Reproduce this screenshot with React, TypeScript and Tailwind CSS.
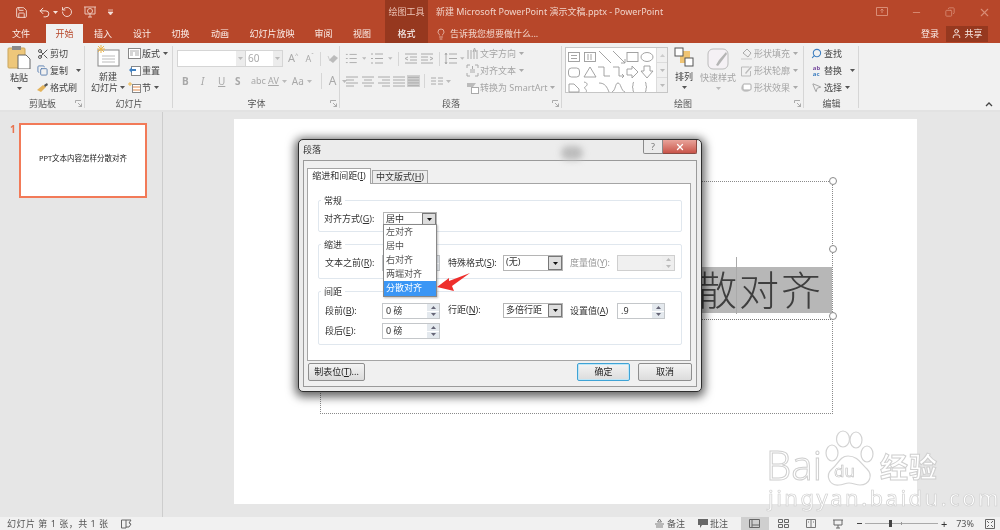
import React from 'react';
import { Save, Undo2, RotateCcw, Lightbulb, Scissors, Search, MousePointer2, User, Minus, X, Copy } from 'lucide-react';

const Caret = ({ color = '#555', className = '' }: { color?: string; className?: string }) => (
  <svg width="5" height="3" viewBox="0 0 5 3" className={className}>
    <path d="M0 0h5L2.5 3z" fill={color} />
  </svg>
);

const Launcher = () => (
  <svg width="7" height="7" viewBox="0 0 7 7" className="absolute right-[3px] bottom-[3px]">
    <path d="M.5 3V.5H6M6.5 6.5L3 3M6.5 3.5v3h-3" stroke="#999" fill="none" strokeWidth="0.8" />
  </svg>
);

const Group = ({ w, label, launcher, children }: { w: number; label: string; launcher?: boolean; children: React.ReactNode }) => (
  <div className="relative flex h-full flex-col" style={{ width: w }}>
    <div className="flex flex-1 pt-[2px]">{children}</div>
    <div className="h-[14px] pt-[2px] text-center text-[9px] leading-[12px] text-[#555]">{label}</div>
    {launcher && <Launcher />}
    <div className="absolute right-0 top-[3px] bottom-[2px] w-px bg-[#d6d6d6]" />
  </div>
);

const SmallBtn = ({ icon, text, caret, muted }: { icon: React.ReactNode; text: string; caret?: boolean; muted?: boolean }) => (
  <div className={`flex h-[17px] items-center text-[9px] ${muted ? 'text-[#a5a5a5]' : 'text-[#444]'}`}>
    <span className="flex w-[15px] justify-center">{icon}</span>
    <span className="whitespace-nowrap">{text}</span>
    {caret && <Caret color={muted ? '#aaa' : '#555'} className="ml-[3px]" />}
  </div>
);

const PasteIcon = () => (
  <svg width="24" height="24" viewBox="0 0 24 24">
    <rect x="1" y="3" width="17" height="20" rx="1" fill="#eec77a" stroke="#c9a55c" />
    <rect x="5" y="1" width="9" height="4" fill="#8b8b8b" />
    <path d="M11 10h8l4 4v10H11z" fill="#fff" stroke="#666" />
  </svg>
);

const NewSlideIcon = () => (
  <svg width="24" height="22" viewBox="0 0 24 22">
    <rect x="2" y="5" width="21" height="16" fill="#fff" stroke="#888" />
    <path d="M6 11h13M6 14h13M6 17h13" stroke="#bbb" />
    <path d="M5 0v8M1 4h8M2 1l6 6M8 1L2 7" stroke="#eeb64a" strokeWidth="1" />
  </svg>
);

const ArrangeIcon = () => (
  <svg width="20" height="20" viewBox="0 0 20 20">
    <rect x="6" y="4" width="10" height="12" fill="#f0c473" />
    <rect x="1" y="1" width="8" height="8" fill="#fff" stroke="#555" />
    <rect x="11" y="11" width="8" height="8" fill="#fff" stroke="#555" />
  </svg>
);

const StyleIcon = () => (
  <svg width="22" height="22" viewBox="0 0 22 22">
    <rect x="1" y="1" width="20" height="20" rx="5" fill="#f5f1f5" stroke="#bbb" />
    <path d="M9 17l3-5 7-8 1 2-6 8-3 4z" fill="#b5b5b5" />
  </svg>
);

const ListIcon = ({ kind }: { kind: string }) => {
  const lines: Record<string, string> = {
    left: 'M1 2h12M1 5h8M1 8h12M1 11h8',
    center: 'M1 2h12M3 5h8M1 8h12M3 11h8',
    right: 'M1 2h12M5 5h8M1 8h12M5 11h8',
    justify: 'M1 2h12M1 5h12M1 8h12M1 11h12',
    bullet: 'M1 2h2M5 2h8M1 6.500h2M5 6.500h8M1 11h2M5 11h8',
    indentL: 'M1 2h12M6 5h7M6 8h7M1 11h12M4 5L1 6.500 4 8',
    indentR: 'M1 2h12M1 5h7M1 8h7M1 11h12M10 5l3 1.500L10 8',
    spacing: 'M5 2h8M5 6.500h8M5 11h8M2 1v11M1 3l1-2 1 2M1 10l1 2 1-2',
    cols: 'M1 3h5M8 3h5M1 6h5M8 6h5M1 9h5M8 9h5',
  };
  return (
    <svg width="14" height="13" viewBox="0 0 14 13">
      <path d={lines[kind]} stroke="#aaa" strokeWidth="1" fill="none" />
    </svg>
  );
};

const Gallery = () => (
  <svg width="90" height="46" viewBox="0 0 90 46" className="block">
    <g stroke="#9a9a9a" fill="none" strokeWidth="0.9">
      <rect x="2.500" y="4.500" width="11" height="9" />
      <path d="M5 7.500h6M5 10.500h6" />
      <rect x="18.500" y="4.500" width="11" height="9" />
      <path d="M22 6v6M25 6v6" />
      <path d="M33 3l12 12M47 3l12 12M55 15h4v-4" />
      <rect x="61" y="4.500" width="11" height="9" />
      <ellipse cx="81" cy="9" rx="6" ry="4.500" />
      <rect x="2.500" y="20" width="11" height="9" rx="3" />
      <path d="M18 29l6-10 6 10z" />
      <path d="M32 19h6v9h6M47 19h6v9h5M56 26l2 2-2 2" />
      <path d="M61 21h5v-3l6 6-6 6v-3h-5z" />
      <path d="M78 18h6v5h3l-6 7-6-7h3z" />
      <path d="M3 36h5l5 5v3H3zM18 34c5 1 3 4 1 5s3 3 1 5M33 35c6 0 8 4 10 9M46 44c4-2 3-9 6-9s3 8 7 9" />
      <path d="M68 34c-2 0 0 5-2 5 2 0 0 5 2 5M79 34c2 0 0 5 2 5-2 0 0 5-2 5" />
    </g>
  </svg>
);

const Spinner = ({ disabled }: { disabled?: boolean }) => (
  <div className="flex w-[12px] flex-col gap-px">
    <div className={`flex flex-1 items-center justify-center ${disabled ? 'bg-[#eeeeee]' : 'bg-[#e4e9ee]'}`}>
      <svg width="5" height="3" viewBox="0 0 5 3"><path d="M0 3h5L2.500 0z" fill={disabled ? '#bbb' : '#667'} /></svg>
    </div>
    <div className={`flex flex-1 items-center justify-center ${disabled ? 'bg-[#eeeeee]' : 'bg-[#e4e9ee]'}`}>
      <Caret color={disabled ? '#bbb' : '#667'} />
    </div>
  </div>
);

const NumInput = ({ w, value, disabled }: { w: number; value?: string; disabled?: boolean }) => (
  <div className={`flex h-[16px] shrink-0 border ${disabled ? 'border-[#cfcfcf] bg-[#f0f0f0]' : 'border-[#c4c7ca] bg-white'}`} style={{ width: w }}>
    <div className="flex-1 pl-[3px] text-[9px] leading-[14px] text-[#333]">{value}</div>
    <Spinner disabled={disabled} />
  </div>
);

const Combo = ({ w, h, value }: { w: number; h: number; value: string }) => (
  <div className="flex shrink-0 border border-[#b5b5b5] bg-white" style={{ width: w, height: h }}>
    <div className="flex-1 pl-[2px] text-[9px] leading-[12px] text-[#333]">{value}</div>
    <div className="flex w-[14px] items-center justify-center border border-[#777] bg-[#dedede]">
      <Caret color="#111" />
    </div>
  </div>
);

const Legend = ({ children }: { children: React.ReactNode }) => (
  <span className="absolute -top-[7px] left-[2px] bg-white px-[3px] text-[9px] leading-[13px] text-[#333]">{children}</span>
);

const DlgBtn = ({ children, w, primary }: { children: React.ReactNode; w: number; primary?: boolean }) => (
  <div
    className={`flex h-[18px] items-center justify-center rounded-[2px] border bg-gradient-to-b from-[#f4f4f4] to-[#dcdcdc] text-[9px] text-[#222] ${
      primary ? 'border-[#3fa3d5] shadow-[inset_0_0_0_1px_#bfe6f7]' : 'border-[#8e8e8e]'
    }`}
    style={{ width: w }}
  >
    {children}
  </div>
);

const Paw = () => (
  <svg width="56" height="60" viewBox="0 0 56 60">
    <g fill="none" stroke="#d3d3d3" strokeWidth="1.200">
      <ellipse cx="12" cy="23" rx="6" ry="8" fill="#fff" fillOpacity="0.7" />
      <ellipse cx="23" cy="9" rx="6.500" ry="8" fill="#fff" fillOpacity="0.7" />
      <ellipse cx="36" cy="10" rx="6" ry="8" fill="#fff" fillOpacity="0.7" />
      <ellipse cx="47" cy="24" rx="6" ry="8" fill="#fff" fillOpacity="0.7" />
      <path d="M28 26c-8 0-10 8-16 13-7 6-3 17 7 16 4 0 6-2 10-2s7 2 11 2c10 0 13-10 7-16-6-5-9-13-19-13z" fill="#fff" fillOpacity="0.7" />
    </g>
  </svg>
);

export default function App() {
  const tabs = [
    ['文件', 'w-[42px] mr-[4px]'],
    ['开始', 'w-[37px]'],
    ['插入', 'w-[40px]'],
    ['设计', 'w-[38px]'],
    ['切换', 'w-[39px]'],
    ['动画', 'w-[40px]'],
    ['幻灯片放映', 'w-[64px]'],
    ['审阅', 'w-[39px]'],
    ['视图', 'w-[38px] mr-[4px]'],
  ];

  return (
    <div className="relative flex h-[530px] w-[1000px] flex-col overflow-hidden bg-[#e6e6e6] font-['Noto_Sans','Noto_Sans_CJK_SC',sans-serif] blur-[0.4px]">
      {/* title bar */}
      <div className="flex h-[24px] items-center bg-[#b7472a] text-white">
        <div className="flex items-center pl-[15px]">
          <Save size={13} strokeWidth={1.6} className="text-[#f6e3dc]" />
          <Undo2 size={13} strokeWidth={1.8} className="ml-[10px] text-[#f6e3dc]" />
          <Caret color="#f6e3dc" className="ml-[2px]" />
          <RotateCcw size={12} strokeWidth={1.8} className="ml-[3px] text-[#f6e3dc]" />
          <svg width="14" height="14" viewBox="0 0 14 14" className="ml-[10px]">
            <path d="M1 2h12M2 2v7h10V2M7 9v3M5 12h4" stroke="#ecc7ba" fill="none" />
            <circle cx="7" cy="6" r="2.500" stroke="#ecc7ba" fill="none" />
          </svg>
          <svg width="6" height="6" viewBox="0 0 6 6" className="ml-[11px]">
            <path d="M0 1h5M0 3h5l-2.500 3z" stroke="#f6e3dc" strokeWidth="0.7" fill="#f6e3dc" />
          </svg>
        </div>
        <div className="ml-[271px] flex h-full w-[43px] items-center justify-center bg-[#96381f] text-[9px] whitespace-nowrap text-[#ecc3b5]">绘图工具</div>
        <div className="ml-[8px] text-[9px] whitespace-nowrap text-[#f0d2c8]">新建 Microsoft PowerPoint 演示文稿.pptx - PowerPoint</div>
        <div className="ml-auto flex items-center pr-[9px] text-[#d98d76]">
          <svg width="12" height="10" viewBox="0 0 12 10"><path d="M.5.500h11v8H.5zM6 2v4M4.500 3.500L6 2l1.500 1.500" stroke="#d98d76" fill="none" /></svg>
          <Minus size={11} className="ml-[23px]" />
          <Copy size={10} className="ml-[23px] -scale-x-100" />
          <X size={13} className="ml-[23px]" />
        </div>
      </div>

      {/* tabs */}
      <div className="flex h-[19px] items-stretch bg-[#b7472a] text-[9px] text-[#fbeee9]">
        {tabs.map(([name, width]) => (
          <div
            key={name}
            className={`${width} flex items-center justify-center ${name === '开始' ? 'bg-[#f1f1f1] text-[#b7472a]' : ''}`}
          >
            {name}
          </div>
        ))}
        <div className="flex w-[43px] items-center justify-center bg-[#96381f] text-white">格式</div>
        <div className="ml-[7px] flex items-center text-[9px] text-[#f3d6cc]">
          <Lightbulb size={12} strokeWidth={1.4} />
          <span className="ml-[3px]">告诉我您想要做什么...</span>
        </div>
        <div className="ml-auto flex items-center pr-[12px] text-[9px]">
          <span>登录</span>
          <div className="ml-[7px] flex h-[16px] w-[42px] items-center justify-center bg-[#96381f]">
            <User size={11} />
            <span className="ml-[2px]">共享</span>
          </div>
        </div>
      </div>

      {/* ribbon */}
      <div className="relative flex h-[67px] bg-[#f1f1f1]">
        <Group w={85} label="剪贴板" launcher>
          <div className="ml-[7px] flex w-[24px] flex-col items-center text-[9px] leading-[12px] text-[#444]">
            <PasteIcon />
            <span className="mt-[3px]">粘贴</span>
            <Caret className="mt-[3px]" />
          </div>
          <div className="ml-[4px] flex flex-col">
            <SmallBtn icon={<Scissors size={12} className="text-[#555]" />} text="剪切" />
            <div className="flex items-center">
              <SmallBtn icon={<Copy size={11} className="text-[#5a7fb0]" />} text="复制" />
              <Caret className="ml-[8px]" />
            </div>
            <SmallBtn
              icon={<svg width="13" height="11" viewBox="0 0 13 11"><path d="M1 8l6-5 3 2-5 5z" fill="#e4b35a" /><path d="M8 3l3-2 1 2-3 2z" fill="#555" /></svg>}
              text="格式刷"
            />
          </div>
        </Group>

        <Group w={88} label="幻灯片">
          <div className="ml-[5px] flex w-[36px] flex-col items-center text-[9px] leading-[11px] text-[#444]">
            <NewSlideIcon />
            <span className="mt-[4px]">新建</span>
            <span className="flex items-center whitespace-nowrap">幻灯片<Caret className="ml-[2px]" /></span>
          </div>
          <div className="ml-[1px] flex flex-col">
            <SmallBtn
              icon={<svg width="13" height="11" viewBox="0 0 13 11"><rect x=".5" y=".5" width="12" height="10" fill="#fff" stroke="#888" /><path d="M2 3h9M2 5h3M2 7h3M7 5h4M7 7h4" stroke="#aaa" /></svg>}
              text="版式"
              caret
            />
            <SmallBtn
              icon={<svg width="13" height="11" viewBox="0 0 13 11"><rect x="3.500" y="1.500" width="9" height="9" fill="#fff" stroke="#888" /><path d="M1 5l3-3v2h4v2H4v2z" fill="#3f7fc0" /></svg>}
              text="重置"
            />
            <SmallBtn
              icon={<svg width="13" height="11" viewBox="0 0 13 11"><rect x="4.500" y="2.500" width="8" height="8" fill="#fff" stroke="#888" /><path d="M5 5h7M5 8h7" stroke="#e0894a" /><path d="M2 0v4M0 2h4" stroke="#eeb64a" /></svg>}
              text="节"
              caret
            />
          </div>
        </Group>

        <Group w={167} label="字体" launcher>
          <div className="ml-[4px] flex flex-col">
            <div className="mt-[5px] flex h-[17px] items-center">
              <div className="flex h-[17px] w-[69px] border border-[#d5d5d5] bg-white">
                <div className="flex-1" />
                <div className="flex w-[9px] items-center justify-center bg-[#ececec]"><Caret color="#bbb" /></div>
              </div>
              <div className="flex h-[17px] w-[37px] border border-l-0 border-[#d5d5d5] bg-white">
                <div className="flex-1 pl-[2px] text-[10px] leading-[15px] text-[#aaa]">60</div>
                <div className="flex w-[9px] items-center justify-center bg-[#ececec]"><Caret color="#bbb" /></div>
              </div>
              <span className="ml-[5px] text-[11px] text-[#aaa]">A</span>
              <span className="relative -top-[3px] text-[6px] text-[#aaa]">^</span>
              <span className="ml-[7px] text-[9px] text-[#aaa]">A</span>
              <span className="relative -top-[3px] text-[6px] text-[#aaa]">ˇ</span>
              <div className="ml-[6px] h-[14px] w-px bg-[#d6d6d6]" />
              <svg width="12" height="12" viewBox="0 0 12 12" className="ml-[6px]"><path d="M2 7l5-5 4 3-5 5z" fill="#bbb" /><path d="M1 3l2 5" stroke="#ccc" /></svg>
            </div>
            <div className="mt-[6px] flex h-[16px] items-center text-[10px] text-[#a8a8a8]">
              <span className="ml-[5px] w-[19px] font-bold">B</span>
              <span className="w-[17px] italic">I</span>
              <span className="w-[17px] underline">U</span>
              <span className="w-[16px] font-bold">S</span>
              <span className="w-[17px] text-[9px]">abc</span>
              <span className="text-[9px] underline">AV</span>
              <Caret color="#bbb" className="ml-[3px]" />
              <span className="ml-[5px]">Aa</span>
              <Caret color="#bbb" className="ml-[3px]" />
              <div className="ml-[9px] h-[16px] w-px bg-[#d6d6d6]" />
              <span className="ml-[7px] text-[12px]">A</span>
              <Caret color="#bbb" className="ml-[6px]" />
            </div>
          </div>
        </Group>

        <Group w={222} label="段落" launcher>
          <div className="ml-[5px] flex w-[120px] flex-col">
            <div className="mt-[5px] flex h-[17px] items-center">
              <ListIcon kind="bullet" />
              <Caret color="#bbb" className="ml-[4px]" />
              <span className="ml-[4px]"><ListIcon kind="bullet" /></span>
              <Caret color="#bbb" className="ml-[4px]" />
              <div className="ml-[5px] h-[14px] w-px bg-[#d6d6d6]" />
              <span className="ml-[5px]"><ListIcon kind="indentL" /></span>
              <span className="ml-[2px]"><ListIcon kind="indentR" /></span>
              <div className="ml-[5px] h-[14px] w-px bg-[#d6d6d6]" />
              <span className="ml-[5px]"><ListIcon kind="spacing" /></span>
              <Caret color="#bbb" className="ml-[2px]" />
            </div>
            <div className="mt-[6px] flex h-[16px] items-center">
              <ListIcon kind="left" />
              <span className="ml-[2px]"><ListIcon kind="center" /></span>
              <span className="ml-[2px]"><ListIcon kind="right" /></span>
              <span className="ml-[1px]"><ListIcon kind="justify" /></span>
              <span className="ml-[1px] flex h-[12px] w-[13px] bg-[#cfcfcf]"><ListIcon kind="justify" /></span>
              <div className="ml-[4px] h-[14px] w-px bg-[#d6d6d6]" />
              <span className="ml-[5px]"><ListIcon kind="cols" /></span>
              <Caret color="#bbb" className="ml-[2px]" />
            </div>
          </div>
          <div className="flex flex-col">
            <SmallBtn muted caret text="文字方向" icon={<svg width="13" height="13" viewBox="0 0 13 13"><path d="M2 3v9M5 3v9M8 12V3M11 12V3M7 5l1.500-4L10 5" stroke="#aaa" fill="none" /></svg>} />
            <SmallBtn muted caret text="对齐文本" icon={<svg width="13" height="13" viewBox="0 0 13 13"><path d="M1 4V1h3M9 1h3v3M1 9v3h3M9 12h3V9M4 6h5M4 8h5M6.500 2v3" stroke="#aaa" fill="none" /></svg>} />
            <SmallBtn muted caret text="转换为 SmartArt" icon={<svg width="13" height="13" viewBox="0 0 13 13"><path d="M1 2h9l-3 4H1z" fill="#bbb" /><rect x="5.500" y="6.500" width="7" height="6" fill="#fff" stroke="#aaa" /></svg>} />
          </div>
        </Group>

        <Group w={242} label="绘图" launcher>
          <div className="ml-[3px] mt-[2px] flex h-[46px] border border-[#c6c6c6] bg-white">
            <Gallery />
            <div className="flex w-[11px] flex-col border-l border-[#dcdcdc] bg-[#f0f0f0]">
              <div className="flex flex-1 items-center justify-center border-b border-[#dcdcdc]"><Caret color="#ccc" className="rotate-180" /></div>
              <div className="flex flex-1 items-center justify-center border-b border-[#dcdcdc]"><Caret color="#bbb" /></div>
              <div className="flex flex-1 items-center justify-center"><Caret color="#bbb" /></div>
            </div>
          </div>
          <div className="ml-[4px] flex w-[24px] flex-col items-center text-[9px] leading-[12px] text-[#444]">
            <span className="mt-[2px]"><ArrangeIcon /></span>
            <span className="mt-[4px] whitespace-nowrap">排列</span>
            <Caret className="mt-[3px]" />
          </div>
          <div className="ml-[4px] flex w-[36px] flex-col items-center text-[9px] leading-[12px] text-[#a5a5a5]">
            <span className="mt-[3px]"><StyleIcon /></span>
            <span className="mt-[2px] whitespace-nowrap">快速样式</span>
            <Caret color="#bbb" className="mt-[3px]" />
          </div>
          <div className="ml-[3px] flex flex-col">
            <SmallBtn muted caret text="形状填充" icon={<svg width="13" height="13" viewBox="0 0 13 13"><path d="M3 6l4-4 4 4-3 4z" fill="none" stroke="#aaa" /><rect x="1" y="11" width="11" height="2" fill="#ddd" /></svg>} />
            <SmallBtn muted caret text="形状轮廓" icon={<svg width="13" height="13" viewBox="0 0 13 13"><path d="M1.500 3h8M1.500 3v9h9V7" stroke="#bbb" fill="none" /><path d="M5 9l6-7 1 1-6 7z" fill="#bbb" /></svg>} />
            <SmallBtn muted caret text="形状效果" icon={<svg width="13" height="13" viewBox="0 0 13 13"><ellipse cx="6" cy="7" rx="5" ry="4" fill="#ccc" /><rect x="3" y="3" width="8" height="6" rx="1" fill="#fff" stroke="#aaa" /></svg>} />
          </div>
        </Group>

        <Group w={55} label="编辑">
          <div className="ml-[5px] flex flex-col">
            <SmallBtn icon={<Search size={11} strokeWidth={2.4} className="-scale-x-100 text-[#3f7fc0]" />} text="查找" />
            <div className="flex items-center">
              <SmallBtn icon={<span className="text-[6px] leading-[6px] font-bold text-[#7a4fa0]">ab<br /><span className="text-[#3f7fc0]">ac</span></span>} text="替换" />
              <Caret className="ml-[8px]" />
            </div>
            <SmallBtn icon={<MousePointer2 size={11} strokeWidth={1.2} className="text-[#666]" />} text="选择" caret />
          </div>
        </Group>

        <svg width="8" height="5" viewBox="0 0 8 5" className="absolute right-[7px] bottom-[3px]">
          <path d="M1 4l3-3 3 3" stroke="#444" strokeWidth="1.300" fill="none" />
        </svg>
      </div>

      {/* workspace */}
      <div className="flex flex-1 border-t-2 border-[#e2e2e2]">
        <div className="flex w-[163px] shrink-0 border-r border-[#cdcdcd] pt-[11px]">
          <span className="ml-[10px] w-[9px] text-[10px] leading-[12px] font-bold text-[#e8744f]">1</span>
          <div className="flex h-[75px] w-[128px] items-center justify-center border-[2.5px] border-[#f27a58] bg-white pb-[4px] text-[7.5px] whitespace-nowrap text-[#222]">
            PPT文本内容怎样分散对齐
          </div>
        </div>
        <div className="flex-1 pt-[7px] pl-[71px]">
          <div className="relative h-[385px] w-[683px] bg-white">
            <div className="absolute left-[86px] top-[62px] h-[233px] w-[513px] border border-dotted border-[#8a8a8a]" />
            <div className="absolute left-[86px] top-[200px] h-px w-[513px] border-t border-dotted border-[#777]" />
            <div className="absolute left-[360px] top-[148px] flex h-[46px] w-[238px] items-center justify-end bg-[#b7b7b7] pr-[9px] text-[40px] leading-none tracking-[2px] font-light whitespace-nowrap text-[#3e3e3e]">
              分散对齐
            </div>
            <div className="absolute left-[502px] top-[138px] h-[57px] w-px bg-[#aaa]" />
            {[62, 130, 197].map(top => (
              <div key={top} className="absolute left-[595px] h-[8px] w-[8px] -translate-y-1/2 rounded-full border border-[#8a8a8a] bg-white" style={{ top }} />
            ))}
          </div>
        </div>
      </div>

      {/* status bar */}
      <div className="flex h-[13px] items-center bg-[#f1f1f1] text-[9px] whitespace-nowrap text-[#555]">
        <span className="ml-[7px] tracking-[0.5px]">幻灯片 第 1 张，共 1 张</span>
        <svg width="11" height="10" viewBox="0 0 11 10" className="ml-[12px]"><path d="M.5 1h4.500v8H.5zM5 1h5l-2 3 2 1-2 3H5" stroke="#666" fill="none" /></svg>
        <div className="ml-auto flex h-full items-center pr-[5px]">
          <svg width="9" height="9" viewBox="0 0 9 9"><path d="M0 5h9M1 7h7M1 9h7M4.500 0l2 3h-4z" stroke="#666" strokeWidth="0.8" fill="none" /></svg>
          <span className="ml-[3px]">备注</span>
          <svg width="10" height="9" viewBox="0 0 10 9" className="ml-[13px]"><path d="M0 0h10v6H4L2 9V6H0z" fill="#666" /></svg>
          <span className="ml-[2px]">批注</span>
          <div className="ml-[13px] flex h-full w-[28px] items-center justify-center bg-[#cfcfcf]">
            <svg width="11" height="9" viewBox="0 0 11 9"><path d="M.5.500h10v8H.5zM3 .500v8M3 6h7" stroke="#666" fill="none" /></svg>
          </div>
          <svg width="11" height="9" viewBox="0 0 11 9" className="ml-[9px]"><path d="M.5.500h4v3h-4zM6.500.500h4v3h-4zM.5 5.500h4v3h-4zM6.500 5.500h4v3h-4z" stroke="#666" fill="none" /></svg>
          <svg width="10" height="9" viewBox="0 0 10 9" className="ml-[17px]"><path d="M.5.500h9v8h-9zM5 .500v8M2 3h1M7 3h1" stroke="#777" fill="none" /></svg>
          <svg width="10" height="10" viewBox="0 0 10 10" className="ml-[17px]"><path d="M0 1h10M1 1v5h8V1M5 6v3M3 9h4" stroke="#666" fill="none" /></svg>
          <span className="ml-[14px] h-px w-[5px] bg-[#444]" />
          <div className="relative ml-[3px] h-px w-[73px] bg-[#aaa]">
            <span className="absolute left-[24px] -top-[3px] h-[7px] w-[3px] bg-[#444]" />
            <span className="absolute left-[36px] -top-[1px] h-[3px] w-px bg-[#999]" />
          </div>
          <span className="ml-[3px] text-[11px] leading-none text-[#333]">+</span>
          <span className="ml-[9px]">73%</span>
          <svg width="10" height="10" viewBox="0 0 10 10" className="ml-[11px]"><path d="M.5.500h9v9h-9zM2 2l2 2M8 2L6 4M2 8l2-2M8 8L6 6" stroke="#666" fill="none" /></svg>
        </div>
      </div>

      {/* paragraph dialog */}
      <div className="absolute left-[298px] top-[139px] flex h-[253px] w-[404px] flex-col rounded-[5px] border border-[#2e2e2e] bg-[#ececec] px-[4px] pb-[4px] shadow-[0_2px_10px_3px_rgba(0,0,0,0.6)]">
        <span className="absolute left-[262px] top-[6px] h-[14px] w-[22px] rounded-full bg-[#bdbdbd] blur-[3px]" />
        <div className="relative flex h-[20px] items-center justify-between">
          <span className="text-[9px] text-[#333]">段落</span>
          <div className="-mt-[6px] flex h-[14px] items-stretch">
            <div className="flex w-[20px] items-center justify-center rounded-bl-[2px] border border-t-0 border-[#8a8a8a] bg-[#ebebeb] text-[9px] text-[#777]">?</div>
            <div className="flex w-[34px] items-center justify-center rounded-br-[2px] border border-t-0 border-l-0 border-[#8a4a42] bg-gradient-to-b from-[#e8a39a] to-[#c8544a]">
              <X size={10} strokeWidth={3} className="text-white" />
            </div>
          </div>
        </div>
        <div className="flex flex-1 flex-col border border-[#9a9a9a] bg-[#f0f0f0] px-[3px] pt-[7px]">
          <div className="flex items-end">
            <div className="relative z-10 -mb-px h-[16px] w-[64px] border border-b-0 border-[#a5a5a5] bg-white text-center text-[9px] leading-[14px] text-[#333]">缩进和间距(<u>I</u>)</div>
            <div className="-mb-px ml-px h-[14px] w-[56px] border border-[#a5a5a5] bg-[#ececec] text-center text-[9px] leading-[12px] text-[#333]">中文版式(<u>H</u>)</div>
          </div>
          <div className="h-[178px] w-[384px] border border-[#a5a5a5] bg-white px-[10px] pt-[16px]">
            <div className="relative h-[32px] w-[364px] rounded-[2px] border border-[#e0e7ee] pl-[5px] pt-[11px]">
              <Legend>常规</Legend>
              <div className="flex items-center text-[9px] text-[#333]">
                <span className="w-[59px]">对齐方式(<u>G</u>):</span>
                <Combo w={54} h={14} value="居中" />
              </div>
            </div>
            <div className="relative mt-[12px] h-[35px] w-[364px] rounded-[2px] border border-[#e0e7ee] pl-[6px] pt-[10px]">
              <Legend>缩进</Legend>
              <div className="flex items-center text-[9px] text-[#333]">
                <span className="w-[57px]">文本之前(<u>R</u>):</span>
                <NumInput w={58} />
                <span className="ml-[8px] w-[55px]">特殊格式(<u>S</u>):</span>
                <Combo w={60} h={16} value="(无)" />
                <span className="ml-[7px] w-[47px] text-[#999]">度量值(<u>Y</u>):</span>
                <NumInput w={58} disabled />
              </div>
            </div>
            <div className="relative mt-[12px] h-[54px] w-[364px] rounded-[2px] border border-[#e0e7ee] pl-[6px] pt-[11px]">
              <Legend>间距</Legend>
              <div className="flex items-start text-[9px] text-[#333]">
                <div className="flex flex-col gap-[4px]">
                  <div className="flex items-center">
                    <span className="w-[57px]">段前(<u>B</u>):</span>
                    <NumInput w={58} value="0 磅" />
                  </div>
                  <div className="flex items-center">
                    <span className="w-[57px]">段后(<u>E</u>):</span>
                    <NumInput w={58} value="0 磅" />
                  </div>
                </div>
                <span className="ml-[8px] w-[55px] leading-[14px]">行距(<u>N</u>):</span>
                <Combo w={60} h={15} value="多倍行距" />
                <span className="ml-[7px] w-[47px] leading-[16px]">设置值(<u>A</u>)</span>
                <NumInput w={48} value=".9" />
              </div>
            </div>
          </div>
          <div className="mt-[2px] flex items-center pl-[1px]">
            <DlgBtn w={57}>制表位(<u>T</u>)...</DlgBtn>
            <div className="ml-auto flex gap-[8px] pr-[1px]">
              <DlgBtn w={53} primary>确定</DlgBtn>
              <DlgBtn w={54}>取消</DlgBtn>
            </div>
          </div>
        </div>

        {/* open alignment list */}
        <div className="absolute left-[84px] top-[84px] z-20 flex w-[54px] flex-col border border-[#888] bg-white text-[9px] text-[#555] shadow-[1px_1px_2px_rgba(0,0,0,0.25)]">
          {['左对齐', '居中', '右对齐', '两端对齐'].map(item => (
            <div key={item} className="h-[14px] pl-[2px] leading-[14px]">{item}</div>
          ))}
          <div className="h-[15px] bg-[#3a96f5] pl-[2px] leading-[14px] text-white">分散对齐</div>
        </div>
        <svg width="36" height="21" viewBox="0 0 36 21" className="absolute left-[136px] top-[131px] z-30">
          <path d="M2 16L14 7l0 3L35 2 17 15l2 5z" fill="#ee2f2c" />
        </svg>
      </div>

      {/* watermark */}
      <div className="absolute left-[766px] top-[430px] flex flex-col text-white [-webkit-text-stroke:1px_#cfcfcf]">
        <div className="flex h-[60px] items-end">
          <span className="text-[40px] leading-[50px] font-light">Bai</span>
          <span className="relative -ml-[2px]">
            <Paw />
            <span className="absolute left-[14px] top-[32px] text-[17px] leading-none [-webkit-text-stroke:0.6px_#bbb]">du</span>
          </span>
          <span className="ml-[4px] text-[28px] leading-[46px] font-bold tracking-[1px]">经验</span>
        </div>
        <span className="-mt-[2px] ml-[2px] text-[22px] leading-[18px] tracking-[2.500px] whitespace-nowrap [-webkit-text-stroke:0.7px_#cfcfcf]">jingyan.baidu.com</span>
      </div>
    </div>
  );
}
